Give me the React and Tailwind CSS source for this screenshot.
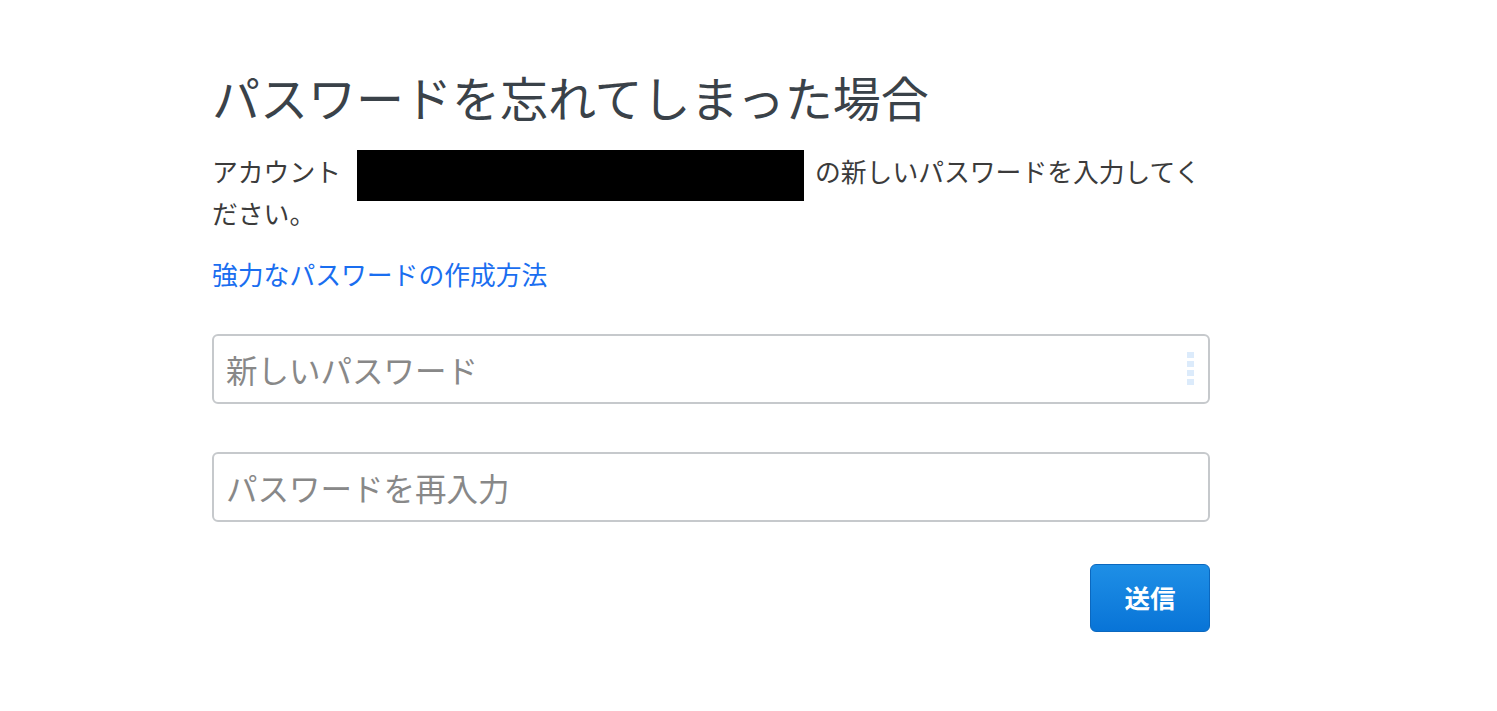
import React from 'react'

const font = { fontFamily: '"Noto Sans CJK JP", "Noto Sans", sans-serif' }

const App = () => {
    return (
        <div className="min-h-screen bg-white pl-[212px] pt-[69px]" style={font}>
            <div className="w-[998px] flex flex-col">
                {/* Title */}
                <h1 className="text-[48px] leading-[54px] font-normal text-[#3a4249]">
                    パスワードを忘れてしまった場合
                </h1>

                {/* Description */}
                <p className="mt-[29px] text-[25.8px] leading-[37.5px] text-[#3b3b3b]">
                    アカウント
                    <span className="inline-block align-middle bg-black w-[447px] h-[51px] -my-[7px] ml-[16px] mr-[11px]"></span>
                    の新しいパスワードを入力してください。
                </p>

                <a href="#" className="mt-[24px] self-start text-[25.8px] leading-[37.5px] text-[#1a6ef0]">
                    強力なパスワードの作成方法
                </a>

                {/* Inputs */}
                <div className="mt-[41px] relative">
                    <input
                        type="password"
                        placeholder="新しいパスワード"
                        className="w-full h-[70px] border-2 border-[#c6c9cc] rounded-[6px] px-[12px] text-[31.5px] placeholder:text-[#888] outline-none"
                        style={font}
                    />
                    <div className="absolute right-[16px] top-[18px] flex flex-col gap-[3px]">
                        <span className="block w-[7px] h-[6px] bg-[#dcebfb]"></span>
                        <span className="block w-[7px] h-[6px] bg-[#dcebfb]"></span>
                        <span className="block w-[7px] h-[6px] bg-[#dcebfb]"></span>
                        <span className="block w-[7px] h-[6px] bg-[#dcebfb]"></span>
                    </div>
                </div>

                <input
                    type="password"
                    placeholder="パスワードを再入力"
                    className="mt-[48px] w-full h-[70px] border-2 border-[#c6c9cc] rounded-[6px] px-[12px] text-[31.5px] placeholder:text-[#888] outline-none"
                    style={font}
                />

                {/* Submit */}
                <div className="mt-[42px] flex justify-end">
                    <button
                        type="button"
                        className="w-[120px] h-[68px] rounded-[6px] border border-[#0b68bf] bg-gradient-to-b from-[#1e8fe6] to-[#0874d7] text-white text-[25.5px] font-bold"
                        style={font}
                    >
                        送信
                    </button>
                </div>
            </div>
        </div>
    )
}

export default App
